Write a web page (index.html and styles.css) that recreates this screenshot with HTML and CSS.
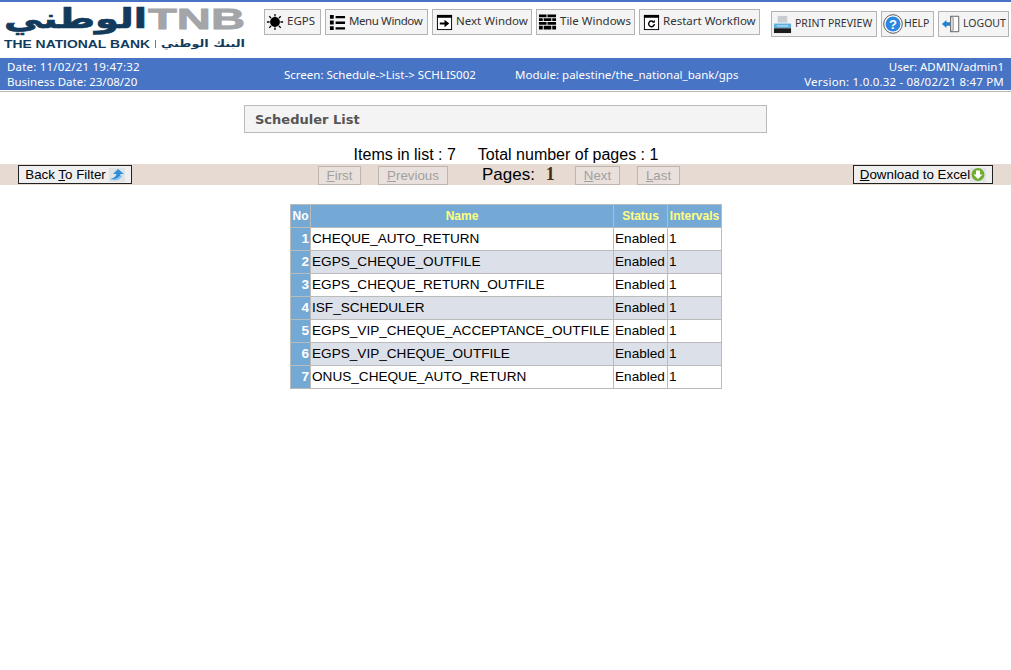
FILE: index.html
```html
<!DOCTYPE html>
<html>
  <head>
    <meta charset="utf-8">
    <title>Scheduler List</title>
    <link rel="stylesheet" href="styles.css">
  </head>
  <body>
    <div class="top-line"></div>
    <div class="header">
      <svg class="logo" width="246" height="50" viewBox="0 0 246 50">
        <text class="logo-ar" x="4" y="24" textLength="143" lengthAdjust="spacingAndGlyphs">الوطني</text>
        <text class="logo-tnb" x="148" y="25" textLength="97" lengthAdjust="spacingAndGlyphs">TNB</text>
        <text class="logo-en" x="4" y="44" textLength="146" lengthAdjust="spacingAndGlyphs">THE NATIONAL BANK</text>
        <rect x="155" y="36" width="1" height="8" fill="#777"/>
        <text class="logo-ar-small" x="161" y="43" textLength="84" lengthAdjust="spacingAndGlyphs">البنك الوطني</text>
      </svg>
      <div class="tools">
        <a class="tool tool-egps">
          <svg width="18" height="18" viewBox="0 0 20 20"><circle cx="10" cy="10" r="5.500" fill="#000"/><path d="M10 1v3M10 16v3M1 10h3M16 10h3M3.600 3.600l2 2M14.400 14.400l2 2M3.600 16.400l2-2M14.400 5.600l2-2" stroke="#000" stroke-width="1.400"/></svg>
          <span>EGPS</span>
        </a>
        <a class="tool tool-menu">
          <svg width="17" height="17" viewBox="0 0 18 18"><path d="M1 1h4v4H1zM1 7h4v4H1zM1 13h4v4H1z"/><path d="M7 2h10v2.500H7zM7 8h10v2.500H7zM7 14h10v2.500H7z"/></svg>
          <span>Menu Window</span>
        </a>
        <a class="tool tool-next">
          <svg width="17" height="17" viewBox="0 0 18 18"><rect x="1.500" y="1.500" width="15" height="15" fill="#fff" stroke="#000"/><path d="M1 1h16v3H1z"/><path d="M4 9h5V6l5 4-5 4v-3H4z"/></svg>
          <span>Next Window</span>
        </a>
        <a class="tool tool-tile">
          <svg width="19" height="18" viewBox="0 0 20 18"><path d="M1 1h8v3H1zM10 1h9v3h-9zM1 5h4v3H1zM6 5h8v3H6zM15 5h4v3h-4zM1 9h8v3H1zM10 9h9v3h-9zM1 13h4v4H1zM6 13h8v4H6zM15 13h4v4h-4z"/></svg>
          <span>Tile Windows</span>
        </a>
        <a class="tool tool-restart">
          <svg width="17" height="17" viewBox="0 0 18 18"><rect x="1.500" y="1.500" width="15" height="15" fill="#fff" stroke="#000"/><path d="M1 1h16v3H1z"/><path d="M12 10.500a3 3 0 1 1-1-2.300" fill="none" stroke="#000" stroke-width="1.500"/><path d="M12.500 6v3.200h-3z"/></svg>
          <span>Restart Workflow</span>
        </a>
      </div>
      <div class="tools tools-right">
        <a class="tool tool-caps tool-print">
          <svg width="19" height="19" viewBox="0 0 20 20"><path d="M5 1h10v7H5z" fill="#c9ccd0"/><path d="M1 9h18v5H1z" fill="#5fb0dc"/><path d="M1 14h18v5H1z" fill="#1c1c1c"/><path d="M4 11h12v1H4z" fill="#d6eefa"/></svg>
          <span>PRINT PREVIEW</span>
        </a>
        <a class="tool tool-caps tool-help">
          <svg width="20" height="20" viewBox="0 0 20 20"><circle cx="10" cy="10" r="9.300" fill="#fff" stroke="#555" stroke-width="1"/><circle cx="10" cy="10" r="7.500" fill="#2a86e0"/><text class="help-mark" x="10" y="14.500">?</text></svg>
          <span>HELP</span>
        </a>
        <a class="tool tool-caps tool-logout">
          <svg width="20" height="20" viewBox="0 0 22 20"><path d="M10.500 1.500h9v17h-9z" fill="#fff" stroke="#555"/><path d="M10.500 1.500l3 2v13l-3 2z" fill="#ddd" stroke="#555" stroke-width=".6"/><path d="M1 10l5-4.500V8h4v4H6v2.500z" fill="#1f83d4"/></svg>
          <span>LOGOUT</span>
        </a>
      </div>
    </div>

    <div class="status-bar">
      <div class="status-left">
        <div class="spaced">Date: 11/02/21 19:47:32</div>
        <div>Business Date: 23/08/20</div>
      </div>
      <div class="status-screen">Screen: Schedule-&gt;List-&gt; SCHLIS002</div>
      <div class="status-module">Module: palestine/the_national_bank/gps</div>
      <div class="status-right">
        <div>User: ADMIN/admin1</div>
        <div class="spaced">Version: 1.0.0.32 - 08/02/21 8:47 PM</div>
      </div>
    </div>
    <div class="status-shadow"></div>

    <div class="title-box">Scheduler List</div>

    <div class="counts">
      <span>Items in list : 7</span>
      <span>Total number of pages : 1</span>
    </div>

    <div class="pager">
      <button class="btn">
        <span>Back <u>T</u>o Filter</span>
        <svg width="16" height="14" viewBox="0 0 16 14"><rect width="16" height="14" fill="#dfe3e6"/><path d="M9 1l6 5h-3.500c0 3-4 6-10 5 3-.5 5.500-2.500 6-5H4z" fill="#2f8fd8"/><path d="M1 11c4 1 9 0 11-4l1 1c-2 4-7 6-12 3z" fill="#7bc0ee"/></svg>
      </button>
      <div class="pager-mid">
        <button class="btn-off btn-first"><u>F</u>irst</button>
        <button class="btn-off btn-prev"><u>P</u>revious</button>
        <div class="pages">Pages: <b>1</b></div>
        <button class="btn-off btn-next"><u>N</u>ext</button>
        <button class="btn-off btn-last"><u>L</u>ast</button>
      </div>
      <button class="btn btn-excel">
        <span><u>D</u>ownload to Excel</span>
        <svg width="16" height="14" viewBox="0 0 16 14"><rect width="16" height="14" fill="#dfe3e6"/><circle cx="8" cy="6.500" r="6.500" fill="#6fae2c"/><path d="M6 2.500h4v4h2.500L8 11 3.500 6.500H6z" fill="#fff"/></svg>
      </button>
    </div>

    <table class="list">
      <thead>
        <tr>
          <th class="col-no">No</th>
          <th class="col-name">Name</th>
          <th class="col-status">Status</th>
          <th class="col-int">Intervals</th>
        </tr>
      </thead>
      <tbody>
        <tr><td class="no">1</td><td>CHEQUE_AUTO_RETURN</td><td>Enabled</td><td>1</td></tr>
        <tr class="alt"><td class="no">2</td><td>EGPS_CHEQUE_OUTFILE</td><td>Enabled</td><td>1</td></tr>
        <tr><td class="no">3</td><td>EGPS_CHEQUE_RETURN_OUTFILE</td><td>Enabled</td><td>1</td></tr>
        <tr class="alt"><td class="no">4</td><td>ISF_SCHEDULER</td><td>Enabled</td><td>1</td></tr>
        <tr><td class="no">5</td><td>EGPS_VIP_CHEQUE_ACCEPTANCE_OUTFILE</td><td>Enabled</td><td>1</td></tr>
        <tr class="alt"><td class="no">6</td><td>EGPS_VIP_CHEQUE_OUTFILE</td><td>Enabled</td><td>1</td></tr>
        <tr><td class="no">7</td><td>ONUS_CHEQUE_AUTO_RETURN</td><td>Enabled</td><td>1</td></tr>
      </tbody>
    </table>
  </body>
</html>
```

FILE: styles.css
```css
body {
  margin: 0;
  background-color: white;
  font-family: "Liberation Sans", Arial, sans-serif;
  color: black;
}

.top-line {
  height: 2px;
  background-color: #4774c4;
}

.header {
  display: flex;
  align-items: flex-start;
  height: 56px;
}

.logo {
  display: block;
  flex: none;
  margin-top: 2px;
  margin-right: 18px;
  overflow: visible;
}

.logo-ar {
  font-family: "DejaVu Sans", sans-serif;
  font-weight: bold;
  font-size: 27px;
  fill: #123a5c;
  stroke: #123a5c;
  stroke-width: 0.7;
}

.logo-tnb {
  font-family: "Liberation Sans", sans-serif;
  font-weight: bold;
  font-size: 29px;
  fill: #a3a5a8;
  stroke: #a3a5a8;
  stroke-width: 0.8;
}

.logo-en {
  font-family: "Liberation Sans", sans-serif;
  font-weight: bold;
  font-size: 11px;
  fill: #123a5c;
}

.logo-ar-small {
  font-family: "DejaVu Sans", sans-serif;
  font-weight: bold;
  font-size: 10px;
  fill: #123a5c;
}

.tools {
  display: flex;
  gap: 4px;
  margin-top: 7px;
}

.tools-right {
  margin-top: 9px;
  margin-left: 11px;
}

.tool {
  display: flex;
  flex: none;
  align-items: center;
  gap: 3px;
  box-sizing: border-box;
  height: 26px;
  padding-left: 3px;
  border: 1px solid #b3b3b3;
  background-color: #f4f4f4;
  font-family: "Noto Sans", sans-serif;
  font-size: 11.5px;
  color: #333333;
  white-space: nowrap;
}

.tool span {
  margin-top: -3px;
}

.tool-caps {
  font-size: 10.5px;
}

.tool-egps { width: 57px; padding-left: 1px; }
.tool-menu { width: 103px; letter-spacing: -0.4px; }
.tool-next { width: 100px; }
.tool-tile { width: 99px; padding-left: 1px; }
.tool-restart { width: 121px; }
.tool-print { width: 106px; padding-left: 1px; }
.tool-help { width: 53px; padding-left: 1px; gap: 1px; }
.tool-logout { width: 71px; padding-left: 2px; gap: 2px; }

.help-mark {
  font-family: "Liberation Sans", sans-serif;
  font-weight: bold;
  font-size: 13px;
  fill: white;
  text-anchor: middle;
}

.status-bar {
  display: flex;
  box-sizing: border-box;
  height: 32px;
  padding: 1px 7px 0;
  background-color: #4774c4;
  font-family: "Noto Sans", sans-serif;
  font-size: 11.5px;
  line-height: 15px;
  color: white;
  white-space: nowrap;
}

.spaced {
  letter-spacing: 0.2px;
}

.status-left {
  width: 277px;
}

.status-screen {
  width: 231px;
  align-self: center;
}

.status-module {
  align-self: center;
}

.status-right {
  margin-left: auto;
  text-align: right;
}

.status-shadow {
  height: 1px;
  margin-top: 1px;
  background-color: #bbbbbb;
}

.title-box {
  box-sizing: border-box;
  width: 523px;
  height: 28px;
  margin: 13px 0 0 244px;
  padding-left: 10px;
  border: 1px solid #bbbbbb;
  background-color: #f4f4f4;
  font-family: "DejaVu Sans", sans-serif;
  font-weight: bold;
  font-size: 13px;
  line-height: 27px;
  color: #555555;
}

.counts {
  display: flex;
  justify-content: center;
  gap: 22px;
  height: 31px;
  margin-left: 1px;
  padding-top: 12px;
  box-sizing: border-box;
  font-size: 16px;
  line-height: 19px;
}

.pager {
  display: flex;
  align-items: flex-start;
  box-sizing: border-box;
  height: 21px;
  padding: 1px 18px 0;
  background-color: #e6dad3;
}

.btn {
  display: flex;
  align-items: center;
  justify-content: center;
  gap: 3px;
  box-sizing: border-box;
  width: 114px;
  height: 19px;
  padding: 0;
  border: 1px solid #222222;
  background-color: #efefef;
  font-family: "Liberation Sans", sans-serif;
  font-size: 13.33px;
  color: black;
}

.btn-excel {
  width: 140px;
  gap: 0;
  margin-left: auto;
}

.pager-mid {
  display: flex;
  align-items: flex-start;
  margin-left: 186px;
}

.btn-off {
  box-sizing: border-box;
  height: 19px;
  margin-top: 1px;
  padding: 0;
  border: 1px solid #bdb6b1;
  background-color: #e9e0db;
  font-family: "Liberation Sans", sans-serif;
  font-size: 13.33px;
  color: #a0a0a0;
}

.btn-first { width: 43px; }
.btn-prev { width: 70px; margin-left: 17px; }
.btn-next { width: 45px; }
.btn-last { width: 43px; margin-left: 17px; }

.pages {
  width: 127px;
  box-sizing: border-box;
  padding-left: 34px;
  font-size: 17px;
  line-height: 19px;
}

.pages b {
  margin-left: 6px;
  font-family: "Liberation Serif", serif;
  font-size: 18px;
  color: #4a2a10;
}

.list {
  width: 432px;
  margin: 19px 0 0 290px;
  border-collapse: collapse;
  table-layout: fixed;
  font-size: 13.6px;
}

.list th {
  height: 22px;
  padding: 0;
  border: 1px solid #bbbbbb;
  background-color: #74a9d6;
  font-size: 12px;
  color: #ffff80;
}

.list th.col-no {
  color: white;
}

.col-no { width: 19px; }
.col-name { width: 302px; }
.col-status { width: 53px; }
.col-int { width: 53px; }

.list td {
  height: 21px;
  padding: 0 1px 1px;
  border: 1px solid #bbbbbb;
  white-space: nowrap;
}

.list tr.alt td {
  background-color: #dce0e8;
}

.list td.no {
  padding: 0 1px 1px 0;
  background-color: #74a9d6;
  color: white;
  font-weight: bold;
  text-align: right;
}

.list tr.alt td.no {
  background-color: #74a9d6;
}
```
